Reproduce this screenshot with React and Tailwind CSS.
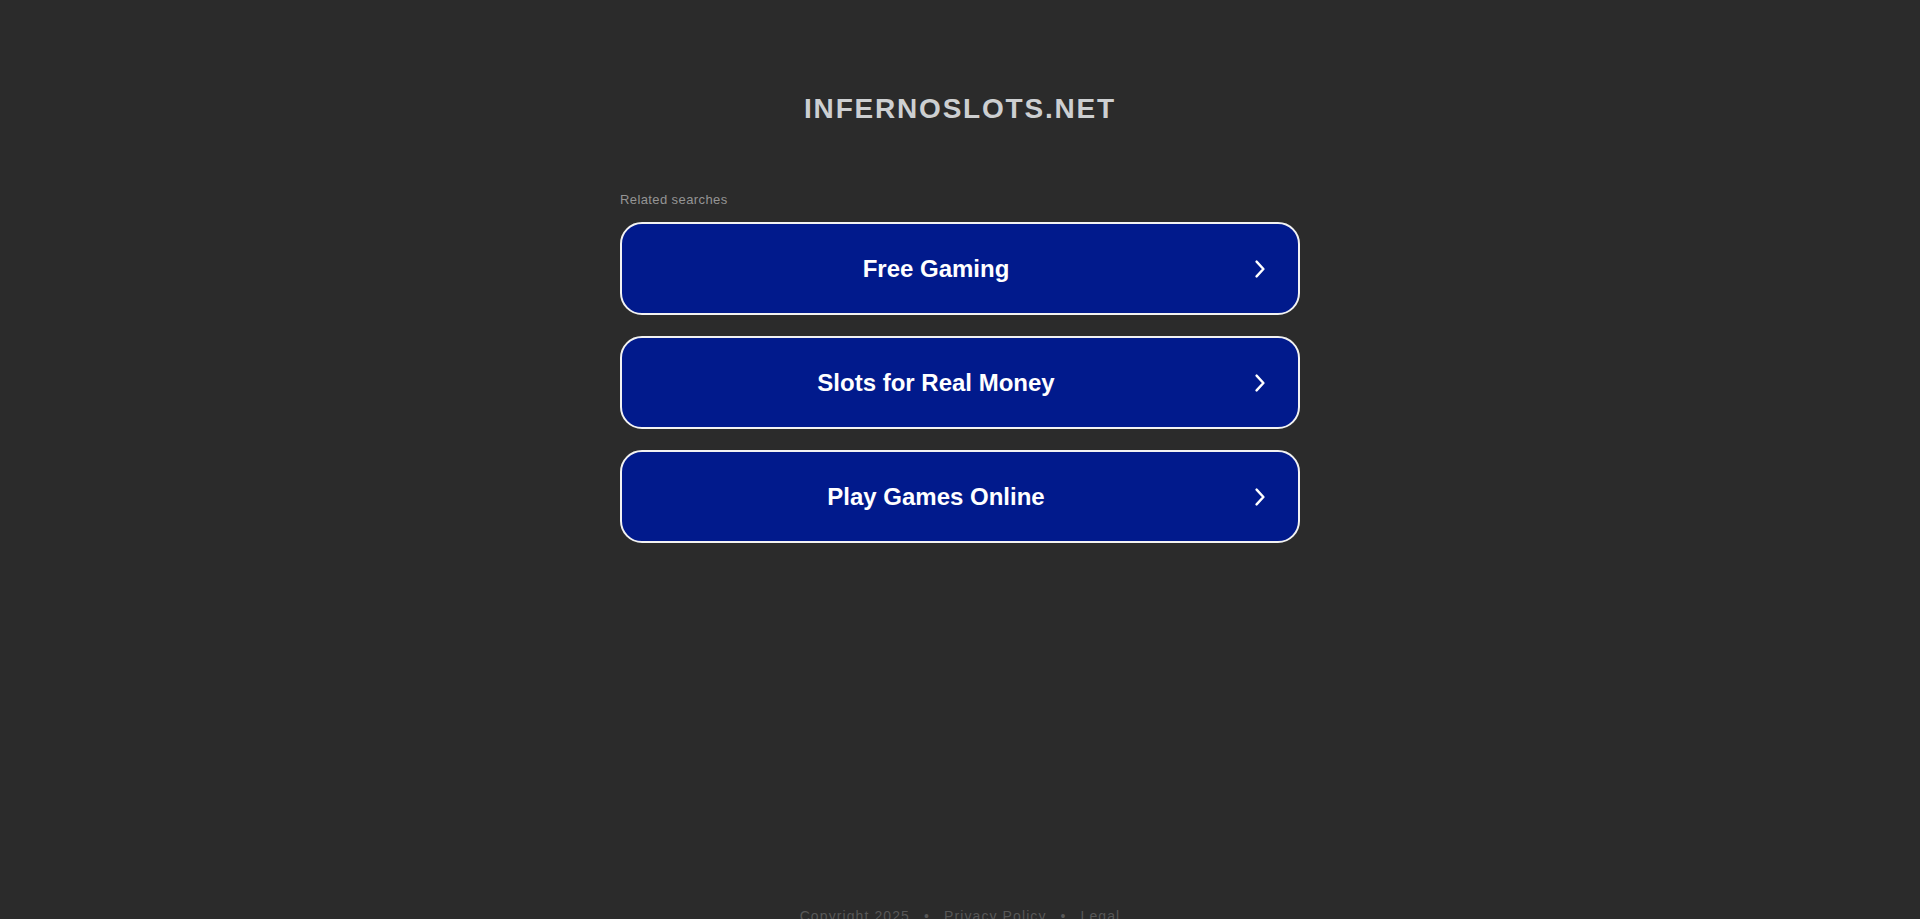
const searches = ['Free Gaming', 'Slots for Real Money', 'Play Games Online'];

function Chevron() {
  return (
    <svg className="ml-[5px] mr-[33px] h-[18px] w-[10px] shrink-0" viewBox="0 0 10 18" fill="none">
      <path d="M1.6 1.6 L8.4 9 L1.6 16.4" stroke="#ffffff" strokeWidth="2.4" strokeLinecap="round" strokeLinejoin="round" />
    </svg>
  );
}

export default function App() {
  return (
    <div className="min-h-screen bg-[#2b2b2b] flex flex-col items-center" style={{ fontFamily: '"Liberation Sans", Arial, sans-serif' }}>
      <h1 className="mt-[95px] text-[28px] leading-[28px] font-bold tracking-[1.8px] text-[#cdcfd1]">
        INFERNOSLOTS.NET
      </h1>

      <div className="mt-[69px] w-[680px]">
        <p className="text-[13px] leading-[15px] tracking-[0.4px] text-[#959595]">Related searches</p>

        <div className="mt-[15px] flex flex-col gap-[21px]">
          {searches.map((s) => (
            <a
              key={s}
              href="#"
              className="flex h-[93px] items-center rounded-[22px] border-2 border-[#f2f2f2] bg-[#011a8c] text-white"
            >
              <span className="flex-1 text-center text-[24px] font-bold leading-[28px]">{s}</span>
              <Chevron />
            </a>
          ))}
        </div>
      </div>

      <footer className="mt-[363px] flex items-center text-[14px] leading-[20px] tracking-[1.1px] text-[#585858]">
        <span>Copyright 2025</span>
        <span className="mx-[14px]">•</span>
        <a href="#">Privacy Policy</a>
        <span className="mx-[14px]">•</span>
        <a href="#">Legal</a>
      </footer>
    </div>
  );
}
